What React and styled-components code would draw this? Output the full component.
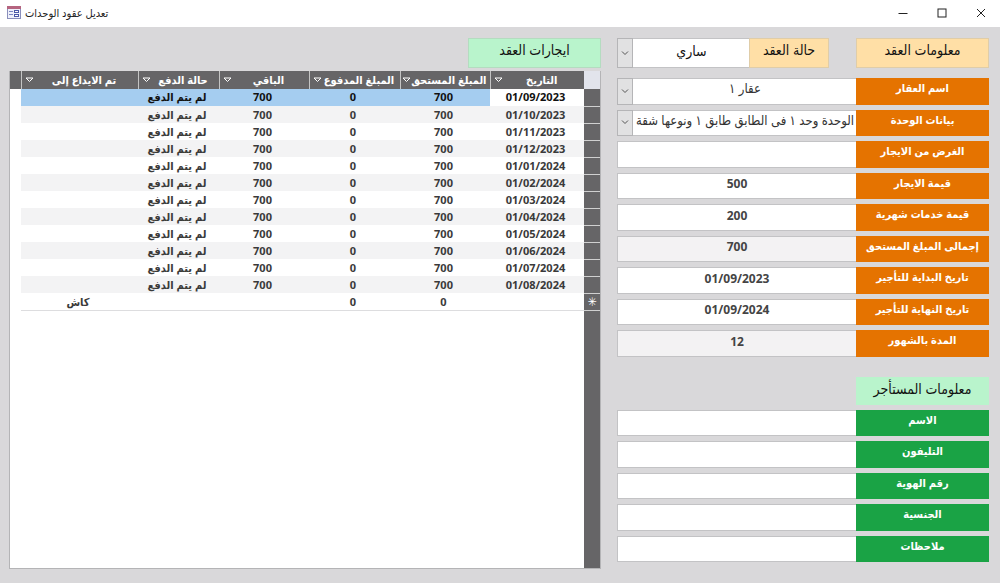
import styled, { createGlobalStyle } from "styled-components";
import React, { useId, useState } from "react";

const GlobalStyle = createGlobalStyle`
  *, *::before, *::after {
    box-sizing: border-box;
  }

  body {
    margin: 0;
    background: #d9d8da;
    font-family: "Noto Sans", "DejaVu Sans Condensed", "DejaVu Sans", sans-serif;
    color: #3a3a3a;
  }
`;

const Window = styled.div`
  display: flex;
  flex-direction: column;
  min-height: 100vh;
`;

const TitleBar = styled.header`
  display: flex;
  align-items: center;
  gap: 4px;
  height: 27px;
  padding: 0 2px 2px 7px;
  background: #fff;
`;

const WindowTitle = styled.h1`
  flex: 1;
  margin: 0;
  font-size: 11px;
  line-height: 20px;
  font-weight: 400;
  color: #222;
`;

const WindowButton = styled.button`
  display: flex;
  align-items: center;
  justify-content: center;
  width: 35px;
  height: 24px;
  padding: 0;
  border: 0;
  background: none;
  color: #222;
  &:hover {
    background: #e5e5e5;
  }
`;

const Body = styled.main`
  flex: 1;
  display: flex;
  gap: 16px;
  padding: 11px 11px 14px 9px;
`;

const Form = styled.form`
  flex: 0 0 372px;
  display: flex;
  flex-direction: column;
  gap: 5px;
  padding-bottom: 7px;
`;

const HeadRow = styled.div`
  display: flex;
  height: 30px;
  margin-bottom: 5px;
`;

const Heading = styled.h2`
  width: 133px;
  height: 30px;
  margin: 0;
  border: 1px solid ${(props) => (props.$green ? "#b4dcc0" : "#e0cda8")};
  background: ${(props) => (props.$green ? "#b9f4cc" : "#ffdfa6")};
  color: #111;
  font-size: 14px;
  line-height: 22px;
  font-weight: 400;
  text-align: center;
`;

const TenantHeading = styled(Heading)`
  height: 28px;
  margin-top: 15px;
  border-color: #b9f4cc;
`;

const StatusLabel = styled.label`
  width: 80px;
  margin-right: 27px;
  border: 1px solid #e0cda8;
  background: #ffdfa6;
  color: #111;
  font-size: 14px;
  line-height: 22px;
  text-align: center;
`;

const Row = styled.div`
  flex: 1 0 26px;
  display: flex;
`;

const RowLabel = styled.label`
  width: 133px;
  background: ${(props) => (props.$green ? "#1aa345" : "#e57300")};
  color: #fff;
  font-size: 11px;
  line-height: 20px;
  font-weight: 700;
  text-align: center;
  white-space: nowrap;
`;

const TextBox = styled.input`
  flex: 1;
  min-width: 0;
  padding: 0 0 4px;
  border: 1px solid #c3c3c5;
  border-right: 0;
  border-radius: 0;
  background: ${(props) => (props.readOnly ? "#f3f2f3" : "#fff")};
  color: #444;
  font: inherit;
  font-size: 12px;
  font-weight: 700;
  text-align: center;
`;

const SelectWrap = styled.div`
  position: relative;
  flex: 1;
  display: flex;
  min-width: 0;
`;

const Select = styled.select`
  appearance: none;
  width: 100%;
  padding: 0 0 6px 16px;
  border: 1px solid #c3c3c5;
  border-right: 0;
  border-radius: 0;
  background: #fff;
  color: ${(props) => (props.$large ? "#111" : "#333")};
  font: inherit;
  font-size: ${(props) => (props.$large ? "14px" : "13px")};
  text-align: center;
  text-align-last: center;
`;

const SelectArrow = styled.span`
  position: absolute;
  top: 0;
  bottom: 0;
  left: 0;
  display: flex;
  align-items: center;
  justify-content: center;
  width: 16px;
  border: 1px solid #b5b5b7;
  background: #e1e1e2;
  pointer-events: none;
`;

const Pane = styled.section`
  flex: 1;
  display: flex;
  flex-direction: column;
  gap: 3px;
  min-width: 0;
`;

const Sheet = styled.div`
  flex: 1;
  border: 1px solid #b4b4b6;
  border-top: 0;
  background: linear-gradient(to left, #666567 16px, #fff 16px);
`;

const Table = styled.table`
  width: 100%;
  border-collapse: collapse;
  table-layout: fixed;
`;

const Col = styled.col`
  width: ${(props) => props.$width};
`;

const HeadCell = styled.th`
  height: 18px;
  padding: 0 3px;
  border-left: 1px solid #c4c4c4;
  background: #666567;
  color: #fff;
  font-size: 11px;
  line-height: 16px;
  font-weight: 700;
`;

const HeadContent = styled.div`
  display: flex;
  align-items: center;
  white-space: nowrap;
`;

const HeadText = styled.span`
  flex: 1;
  text-align: center;
`;

const SortButton = styled.button`
  display: flex;
  padding: 0;
  border: 0;
  background: none;
  color: #fff;
`;

const Corner = styled.th`
  padding: 0;
  background: #e2e4ec;
`;

const HeadEdge = styled.td`
  padding: 0;
  background: #666567;
`;

const Record = styled.tr`
  height: 17px;
  background: ${(props) => (props.$striped ? "#f3f3f4" : "#fff")};
  color: ${(props) => (props.$selected ? "#111" : "#3a3a3a")};
`;

const Cell = styled.td`
  padding: 0 3px 0 0;
  background: ${(props) => (props.$selected ? "#a5cdf0" : "transparent")};
  font-size: 11px;
  line-height: 16px;
  font-weight: 700;
  text-align: center;
  white-space: nowrap;
  border-bottom: 1px solid ${(props) => (props.$last ? "#dddddf" : "transparent")};
`;

const Selector = styled.th`
  padding: 0;
  border-bottom: 1px solid #d0d0d0;
  background: #666567;
  color: #fff;
  font-size: 12px;
  line-height: 16px;
`;

const Edge = styled.td`
  padding: 0;
  background: #fff;
`;

const columns = [
  { title: "التاريخ", width: "94px" },
  { title: "المبلغ المستحق", width: "90px" },
  { title: "المبلغ المدفوع", width: "91px" },
  { title: "الباقي", width: "90px" },
  { title: "حالة الدفع", width: "81px" },
  { title: "تم الايداع إلى", width: "auto" },
];

const dates = [
  "01/09/2023",
  "01/10/2023",
  "01/11/2023",
  "01/12/2023",
  "01/01/2024",
  "01/02/2024",
  "01/03/2024",
  "01/04/2024",
  "01/05/2024",
  "01/06/2024",
  "01/07/2024",
  "01/08/2024",
];

const contractFields = [
  { label: "اسم العقار", value: "عقار ١", type: "select" },
  {
    label: "بيانات الوحدة",
    value: "الوحدة وحد ١ فى الطابق طابق ١ ونوعها شقة",
    type: "select",
  },
  { label: "الغرض من الايجار", value: "" },
  { label: "قيمة الايجار", value: "500" },
  { label: "قيمة خدمات شهرية", value: "200" },
  { label: "إجمالى المبلغ المستحق", value: "700", readOnly: true },
  { label: "تاريخ البداية للتأجير", value: "01/09/2023" },
  { label: "تاريخ النهاية للتأجير", value: "01/09/2024" },
  { label: "المدة بالشهور", value: "12", readOnly: true },
];

const tenantFields = ["الاسم", "التليفون", "رقم الهوية", "الجنسية", "ملاحظات"];

const FormIcon = () => (
  <svg width="14" height="13" viewBox="0 0 14 13" aria-hidden="true">
    <rect x="0.5" y="0.5" width="13" height="12" fill="#eef0fa" stroke="#8a8fbc" />
    <rect x="0" y="0" width="14" height="3" fill="#b5647f" />
    <path d="M2 5.5h4M2 8.5h4" stroke="#7c86c4" />
    <rect x="7.5" y="4.5" width="4" height="2" fill="#fff" stroke="#4a58a8" />
    <rect x="7.5" y="8.5" width="4" height="2" fill="#fff" stroke="#4a58a8" />
  </svg>
);

const DropDown = ({ id, value, large }) => (
  <SelectWrap>
    <Select id={id} defaultValue={value} $large={large}>
      <option value={value}>{value}</option>
    </Select>
    <SelectArrow>
      <svg width="8" height="5" viewBox="0 0 8 5" fill="none" stroke="#555">
        <path d="M1 0.5l3 3 3-3" />
      </svg>
    </SelectArrow>
  </SelectWrap>
);

const Field = ({ label, value, type, readOnly, green }) => {
  const id = useId();
  return (
    <Row>
      <RowLabel htmlFor={id} $green={green}>
        {label}
      </RowLabel>
      {type === "select" ? (
        <DropDown id={id} value={value} />
      ) : (
        <TextBox id={id} type="text" defaultValue={value} readOnly={readOnly} />
      )}
    </Row>
  );
};

const RentTable = () => {
  const [selected, setSelected] = useState(0);

  return (
    <Sheet>
      <Table>
        <colgroup>
          <Col $width="16px" />
          {columns.map((column) => (
            <Col key={column.title} $width={column.width} />
          ))}
          <Col $width="11px" />
        </colgroup>
        <thead>
          <tr>
            <Corner />
            {columns.map((column) => (
              <HeadCell key={column.title} scope="col">
                <HeadContent>
                  <HeadText>{column.title}</HeadText>
                  <SortButton type="button" aria-label={`فرز ${column.title}`}>
                    <svg width="9" height="6" viewBox="0 0 9 6" fill="none" stroke="currentColor">
                      <path d="M1 1h7l-3.5 3.5z" />
                    </svg>
                  </SortButton>
                </HeadContent>
              </HeadCell>
            ))}
            <HeadEdge />
          </tr>
        </thead>
        <tbody>
          {dates.map((date, index) => (
            <Record
              key={date}
              $striped={index % 2 === 1}
              $selected={index === selected}
              onClick={() => setSelected(index)}
            >
              <Selector scope="row" />
              <Cell>{date}</Cell>
              <Cell $selected={index === selected}>700</Cell>
              <Cell $selected={index === selected}>0</Cell>
              <Cell $selected={index === selected}>700</Cell>
              <Cell $selected={index === selected}>لم يتم الدفع</Cell>
              <Cell $selected={index === selected} />
              <Edge />
            </Record>
          ))}
          <Record>
            <Selector scope="row">✳</Selector>
            <Cell $last />
            <Cell $last>0</Cell>
            <Cell $last>0</Cell>
            <Cell $last />
            <Cell $last />
            <Cell $last>كاش</Cell>
            <Edge />
          </Record>
        </tbody>
      </Table>
    </Sheet>
  );
};

const App = () => {
  return (
    <Window>
      <GlobalStyle />
      <TitleBar>
        <FormIcon />
        <WindowTitle>تعديل عقود الوحدات</WindowTitle>
        <WindowButton type="button" aria-label="تصغير">
          <svg width="10" height="10" viewBox="0 0 10 10" stroke="currentColor">
            <path d="M0.5 5.5h9" />
          </svg>
        </WindowButton>
        <WindowButton type="button" aria-label="تكبير">
          <svg width="10" height="10" viewBox="0 0 10 10" fill="none" stroke="currentColor">
            <rect x="1" y="1" width="8" height="8" />
          </svg>
        </WindowButton>
        <WindowButton type="button" aria-label="إغلاق">
          <svg width="10" height="10" viewBox="0 0 10 10" stroke="currentColor">
            <path d="M1 1l8 8M9 1l-8 8" />
          </svg>
        </WindowButton>
      </TitleBar>
      <Body dir="rtl">
        <Form>
          <HeadRow>
            <Heading>معلومات العقد</Heading>
            <StatusLabel htmlFor="status">حالة العقد</StatusLabel>
            <DropDown id="status" value="ساري" large />
          </HeadRow>
          {contractFields.map((field) => (
            <Field key={field.label} {...field} />
          ))}
          <TenantHeading $green>معلومات المستأجر</TenantHeading>
          {tenantFields.map((label) => (
            <Field key={label} label={label} value="" green />
          ))}
        </Form>
        <Pane>
          <Heading $green>ايجارات العقد</Heading>
          <RentTable />
        </Pane>
      </Body>
    </Window>
  );
};

export default App;
